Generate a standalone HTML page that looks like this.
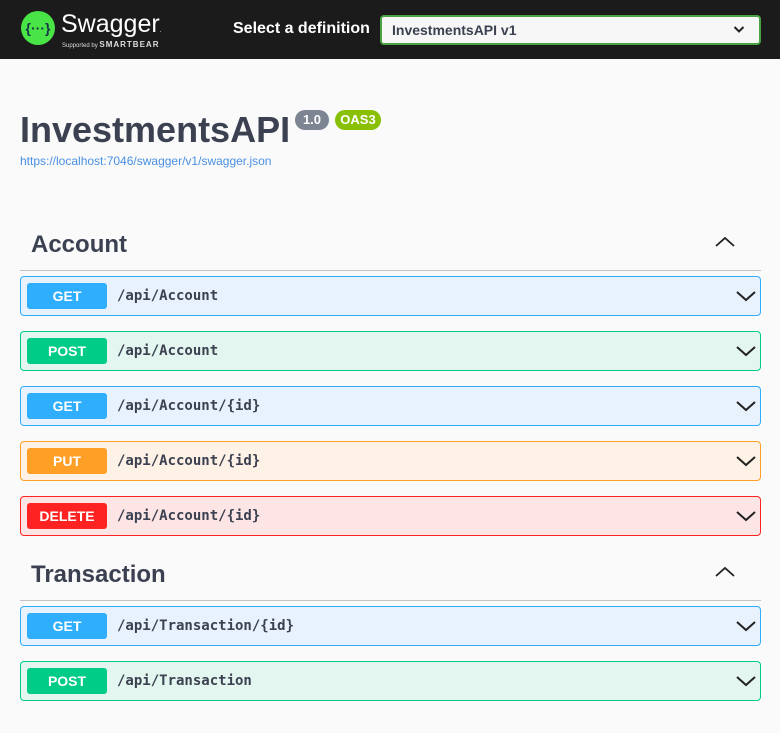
<!DOCTYPE html>
<html><head><style>
*{box-sizing:border-box;margin:0;padding:0}
body{width:780px;height:733px;background:#fafafa;font-family:"Liberation Sans",sans-serif;color:#3b4151;position:relative;overflow:hidden}
.top{position:absolute;left:0;top:0;width:780px;height:59px;background:#1b1b1b}
.abs{position:absolute;white-space:nowrap}
.op{position:absolute;left:20px;width:741px;height:40px;border:1px solid;border-radius:4px}
.badge{position:absolute;left:6px;top:6px;width:80px;height:26px;border-radius:3px;color:#fff;font-weight:bold;font-size:14px;text-align:center;line-height:26px}
.path{position:absolute;left:96px;top:0;line-height:38px;font-family:"DejaVu Sans Mono","Liberation Mono",monospace;font-weight:bold;font-size:14px;color:#3b4151}
.chev{position:absolute;left:715px;top:13px}
.get{background:#ebf3fb;border-color:#61affe}.get .badge{background:#61affe}
.post{background:#e8f6f0;border-color:#49cc90}.post .badge{background:#49cc90}
.put{background:#fbf1e6;border-color:#fca130}.put .badge{background:#fca130}
.del{background:#fae7e7;border-color:#f93e3e}.del .badge{background:#f93e3e}
.get{background:#e8f2fc;border-color:#2eaefc}.get .badge{background:#2eaefc}
.post{background:#e3f6ef;border-color:#00cc88}.post .badge{background:#00cc88}
.put{background:#fef1e5;border-color:#ff9f26}.put .badge{background:#ff9f26}
.del{background:#fee5e5;border-color:#f22}.del .badge{background:#ff2222}
.tag{position:absolute;left:31px;font-size:24px;font-weight:bold;color:#3b4151}
.line{position:absolute;left:20px;width:741px;height:1px;background:#c4c4c8}
</style></head><body>
<div class="top"></div>
<svg class="abs" style="left:20px;top:10px" width="36" height="36"><circle cx="18" cy="18" r="17" fill="#49e546"/><text x="18" y="23" text-anchor="middle" font-family="Liberation Sans" font-size="14" font-weight="bold" fill="#173647">{···}</text></svg>
<div class="abs" style="left:61px;top:10px;font-size:25px;color:#fff">Swagger<span style="font-size:6px">.</span></div>
<div class="abs" style="left:62px;top:40px;font-size:6px;color:#ddd">Supported by <span style="font-size:8px;letter-spacing:1px;font-weight:bold">SMARTBEAR</span></div>
<div class="abs" style="left:233px;top:20px;font-size:16px;font-weight:bold;color:#fff">Select a definition</div>
<div class="abs" style="left:380px;top:15px;width:381px;height:30px;background:#f7f7f7;border:2px solid #49a342;border-radius:4px"></div>
<div class="abs" style="left:392px;top:22px;font-size:14px;font-weight:bold;color:#3b4151">InvestmentsAPI v1</div>
<svg class="abs" style="left:733px;top:25px" width="12" height="9"><path d="M1.5 2 L6 6.5 L10.5 2" stroke="#222" stroke-width="2" fill="none"/></svg>
<div class="abs" style="left:20px;top:109px;font-size:36px;font-weight:bold;color:#3b4151">InvestmentsAPI</div>
<div class="abs" style="left:295px;top:110px;width:34px;height:20px;background:#7d8492;border-radius:10px;color:#fff;font-size:13px;font-weight:bold;text-align:center;line-height:20px">1.0</div>
<div class="abs" style="left:335px;top:110px;width:46px;height:20px;background:#89bf04;border-radius:10px;color:#fff;font-size:13px;font-weight:bold;text-align:center;line-height:20px">OAS3</div>
<div class="abs" style="left:20px;top:154px;font-size:12px;color:#4990e2">https://localhost:7046/swagger/v1/swagger.json</div>

<div class="tag" style="top:231px">Account</div>
<svg class="abs" style="left:715px;top:236px" width="20" height="12"><path d="M1 10 L10 2 L19 10" stroke="#222" stroke-width="1.8" fill="none"/></svg>
<div class="line" style="top:270px"></div>
<div class="op get" style="top:276px"><div class="badge">GET</div><div class="path">/api/Account</div><svg class="chev" width="20" height="12"><path d="M1 2 L10 10 L19 2" stroke="#222" stroke-width="2" fill="none"/></svg></div>
<div class="op post" style="top:331px"><div class="badge">POST</div><div class="path">/api/Account</div><svg class="chev" width="20" height="12"><path d="M1 2 L10 10 L19 2" stroke="#222" stroke-width="2" fill="none"/></svg></div>
<div class="op get" style="top:386px"><div class="badge">GET</div><div class="path">/api/Account/{id}</div><svg class="chev" width="20" height="12"><path d="M1 2 L10 10 L19 2" stroke="#222" stroke-width="2" fill="none"/></svg></div>
<div class="op put" style="top:441px"><div class="badge">PUT</div><div class="path">/api/Account/{id}</div><svg class="chev" width="20" height="12"><path d="M1 2 L10 10 L19 2" stroke="#222" stroke-width="2" fill="none"/></svg></div>
<div class="op del" style="top:496px"><div class="badge">DELETE</div><div class="path">/api/Account/{id}</div><svg class="chev" width="20" height="12"><path d="M1 2 L10 10 L19 2" stroke="#222" stroke-width="2" fill="none"/></svg></div>

<div class="tag" style="top:561px">Transaction</div>
<svg class="abs" style="left:715px;top:566px" width="20" height="12"><path d="M1 10 L10 2 L19 10" stroke="#222" stroke-width="1.8" fill="none"/></svg>
<div class="line" style="top:600px"></div>
<div class="op get" style="top:606px"><div class="badge">GET</div><div class="path">/api/Transaction/{id}</div><svg class="chev" width="20" height="12"><path d="M1 2 L10 10 L19 2" stroke="#222" stroke-width="2" fill="none"/></svg></div>
<div class="op post" style="top:661px"><div class="badge">POST</div><div class="path">/api/Transaction</div><svg class="chev" width="20" height="12"><path d="M1 2 L10 10 L19 2" stroke="#222" stroke-width="2" fill="none"/></svg></div>
</body></html>
